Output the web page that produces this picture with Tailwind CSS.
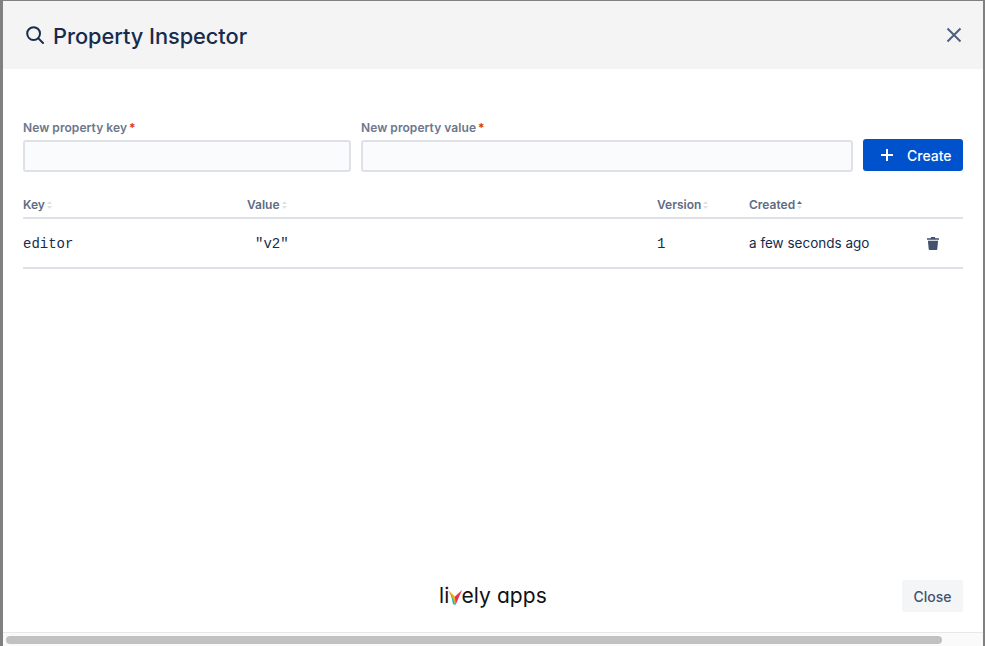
<!DOCTYPE html>
<html>
<head>
<meta charset="utf-8">
<script src="https://cdn.jsdelivr.net/npm/@tailwindcss/browser@4"></script>
</head>
<body class="bg-white">
<div class="w-[985px] h-[646px] overflow-hidden flex flex-col bg-white border-l-[3px] border-r-[2px] border-t border-[#808080] font-['Inter',sans-serif]">
  <header class="h-[68px] shrink-0 bg-[#f4f4f4] flex items-center justify-between pl-[22px] pr-[20px]">
    <div class="flex items-center gap-[8px]">
      <svg class="w-5 h-5 text-[#172b4d]" viewBox="0 0 20 20" fill="none" stroke="currentColor" stroke-width="2" stroke-linecap="round"><circle cx="8.600" cy="8.600" r="6.400"/><path d="M13.400 13.400 18 18"/></svg>
      <h1 class="text-[21.8px] leading-[28px] mt-[2px] font-medium tracking-[-0.05px] text-[#172b4d]">Property Inspector</h1>
    </div>
    <svg class="w-[18px] h-[18px] text-[#4f5f80]" viewBox="0 0 18 18" fill="none" stroke="currentColor" stroke-width="2"><path d="M2.500 2.500 15.500 15.500M15.500 2.500 2.500 15.500"/></svg>
  </header>
  <main class="flex-1 flex flex-col px-[20px] pt-[51px] bg-white">
    <div class="flex items-end gap-[10px]">
      <label class="w-[328px] block">
        <span class="block text-[12px] leading-4 font-semibold tracking-[0.06px] text-[#6b778c] mb-[4px]">New property key<span class="text-[#de350b] ml-[2px]">*</span></span>
        <input class="block w-full h-[32px] rounded-[3px] border-2 border-[#dfe1e6] bg-[#fafbfc]">
      </label>
      <label class="w-[492px] block">
        <span class="block text-[12px] leading-4 font-semibold tracking-[0.06px] text-[#6b778c] mb-[4px]">New property value<span class="text-[#de350b] ml-[2px]">*</span></span>
        <input class="block w-full h-[32px] rounded-[3px] border-2 border-[#dfe1e6] bg-[#fafbfc]">
      </label>
      <button class="w-[100px] h-[32px] mb-[1px] rounded-[3px] bg-[#0052cc] text-white text-[14px] font-medium flex items-center pl-[17px] gap-[13px]">
        <svg class="w-[14px] h-[14px]" viewBox="0 0 14 14" fill="none" stroke="currentColor" stroke-width="2"><path d="M7 1v12M1 7h12"/></svg>
        <span>Create</span>
      </button>
    </div>
    <div class="mt-[24px] pt-[1px] grid grid-cols-[224px_410px_92px_1fr_36px] h-[23px] border-b-2 border-[#dfe1e6] text-[12px] leading-4 font-semibold text-[#5e6c84]">
      <div class="flex items-start gap-[2px]">Key
        <svg class="w-[5px] h-[8px] mt-[4px]" viewBox="0 0 5 8" fill="#dfe1e6"><path d="M2.500 0 5 3H0zM2.500 8 0 5h5z"/></svg>
      </div>
      <div class="flex items-start gap-[2px]">Value
        <svg class="w-[5px] h-[8px] mt-[4px]" viewBox="0 0 5 8" fill="#dfe1e6"><path d="M2.500 0 5 3H0zM2.500 8 0 5h5z"/></svg>
      </div>
      <div class="flex items-start gap-[2px]">Version
        <svg class="w-[5px] h-[8px] mt-[4px]" viewBox="0 0 5 8" fill="#dfe1e6"><path d="M2.500 0 5 3H0zM2.500 8 0 5h5z"/></svg>
      </div>
      <div class="flex items-start gap-[2px]">Created
        <svg class="w-[5px] h-[8px] mt-[4px]" viewBox="0 0 5 8"><path fill="#5e6c84" d="M2.500 0 5 3H0z"/><path fill="#dfe1e6" d="M2.500 8 0 5h5z"/></svg>
      </div>
      <div></div>
    </div>
    <div class="grid grid-cols-[224px_410px_92px_1fr_36px] items-center h-[50px] border-b-2 border-[#dfe1e6] text-[14px] text-[#172b4d]">
      <div class="font-['Liberation_Mono',monospace] pt-[2px]">editor</div>
      <div class="font-['Liberation_Mono',monospace] pl-[8px] pt-[2px]">"v2"</div>
      <div class="font-['Liberation_Mono',monospace] pt-[2px]">1</div>
      <div class="text-[13.5px]">a few seconds ago</div>
      <div class="flex">
        <svg class="w-[12px] h-[13px] text-[#42526e]" viewBox="0 0 12 13" fill="currentColor"><path d="M4.200 0h3.600l.6 1.200H12v1.600H0V1.200h3.600zM.9 3.800h10.200l-.8 8.100c-.1.6-.5 1.100-1.200 1.100H2.900c-.7 0-1.100-.5-1.200-1.100z"/></svg>
      </div>
    </div>
    <div class="flex-1"></div>
    <footer class="grid grid-cols-[1fr_auto_1fr] items-center h-[32px] mb-[20px]">
      <div></div>
      <div class="flex items-end text-[21px] leading-[26px] text-[#111] font-['Inter',sans-serif] font-normal [font-feature-settings:'cv11'] tracking-[0.1px]">
        <span>li</span>
        <svg class="w-[14px] h-[15px] mb-[4px] mx-[-1px]" viewBox="0 0 14 15"><path fill="#f6a623" d="M0 0 7 6.500 7.500 15z"/><path fill="#1fb5a3" d="M2.500 3 7.500 15 5 14z"/><path fill="#e8305a" d="M14 0 7 6.500 7.500 15z"/></svg>
        <span>ely apps</span>
      </div>
      <div class="flex justify-end">
        <button class="w-[61px] h-[32px] rounded-[3px] bg-[#f4f5f7] text-[14px] font-medium text-[#42526e]">Close</button>
      </div>
    </footer>
  </main>
  <div class="h-[14px] shrink-0 bg-[#fafafa] border-t border-[#e8e8e8] px-[3px] pt-[3px]">
    <div class="w-[936px] h-[8px] rounded-full bg-[#c1c1c1]"></div>
  </div>
</div>
</body>
</html>
